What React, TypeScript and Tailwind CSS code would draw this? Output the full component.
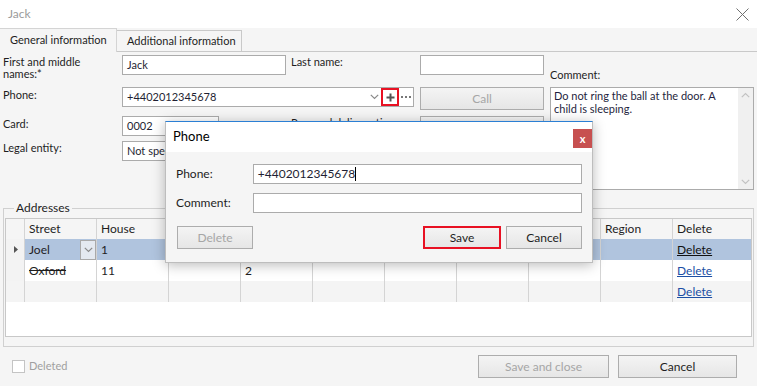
import React from "react";

const fieldCls = "h-[20px] border border-[#ababab] bg-white flex items-center pl-[4px] text-[#1f1f33]";

function Chevron({ up = false, className = "" }: { up?: boolean; className?: string }) {
  return (
    <svg width="9" height="6" viewBox="0 0 9 6" className={className}>
      <path
        d={up ? "M0.8 5.2L4.5 1.5L8.2 5.2" : "M0.8 0.8L4.5 4.5L8.2 0.8"}
        fill="none"
        stroke="currentColor"
        strokeWidth="1.2"
      />
    </svg>
  );
}

function Button({ label, disabled = false, className = "" }: { label: string; disabled?: boolean; className?: string }) {
  return (
    <div
      className={`flex items-center justify-center border border-[#adadad] bg-linear-to-b from-[#f4f4f4] to-[#e6e6e6] ${
        disabled ? "text-[#a6a6a6]" : "text-[#1e1e1e]"
      } ${className}`}
    >
      {label}
    </div>
  );
}

const headers = ["", "Street", "House", "", "", "", "", "", "", "Region", "Delete"];

interface GridRow {
  cells: string[];
  bg: string;
  selected?: boolean;
  struck?: boolean;
}

const rows: GridRow[] = [
  { cells: ["Joel", "1", "", "", "", "", "", "", ""], bg: "bg-[#b0c4de]", selected: true },
  { cells: ["Oxford", "11", "", "2", "", "", "", "", ""], bg: "bg-white", struck: true },
  { cells: ["", "", "", "", "", "", "", "", ""], bg: "bg-[#f4f4f4]" },
];

export default function App() {
  return (
    <div className="relative w-[757px] h-[386px] overflow-hidden bg-[#f5f5f5] text-[11px] text-[#1e1e1e] font-['Lato','Noto_Sans',sans-serif]">
      {/* window title */}
      <div className="h-[28px] bg-white flex items-center justify-between pl-[8px] pr-[8px]">
        <span className="text-[12px] text-[#9b9b9b]">Jack</span>
        <svg width="13" height="13" viewBox="0 0 13 13">
          <path d="M0.5 0.5L12.5 12.5M12.5 0.5L0.5 12.5" stroke="#707070" strokeWidth="1" />
        </svg>
      </div>

      {/* tabs */}
      <div className="flex h-[24px]">
        <div className="w-[117px] border-t border-r border-[#d4d4d4] flex items-center pl-[10px]">
          General information
        </div>
        <div className="mt-[2px] w-[125px] border-r border-t border-b border-[#c9c9c9] flex items-center pl-[10px]">
          Additional information
        </div>
        <div className="flex-1 border-b border-[#c9c9c9]" />
      </div>

      {/* form */}
      <div className="flex h-[149px]">
        <div className="w-[544px] pl-[3px] pt-[3px]">
          <div className="flex h-[20px] items-start">
            <div className="w-[119px] leading-[12px] pt-[1px]">
              First and middle
              <br />
              names:*
            </div>
            <div className={`${fieldCls} w-[164px]`}>Jack</div>
            <div className="ml-[5px] w-[129px] leading-[12px] pt-[1px]">Last name:</div>
            <div className={`${fieldCls} w-[124px]`} />
          </div>

          <div className="flex h-[23px] items-start mt-[12px]">
            <div className="w-[119px] leading-[12px] pt-[2px]">Phone:</div>
            <div className="h-[20px] w-[292px] border border-[#ababab] bg-white flex items-center">
              <div className="flex-1 pl-[4px] text-[#1f1f33]">+4402012345678</div>
              <div className="w-[14px] h-full flex items-center justify-center text-[#8a8a8a]">
                <Chevron />
              </div>
              <div className="w-[18px] h-[18px] border-2 border-[#e81123] flex items-center justify-center">
                <svg width="9" height="9" viewBox="0 0 9 9">
                  <path d="M4.5 0.5V8.5M0.5 4.5H8.5" stroke="#555" strokeWidth="2" />
                </svg>
              </div>
              <div className="w-[14px] h-full flex items-center justify-center">
                <svg width="10" height="2" viewBox="0 0 10 2">
                  <rect x="0" y="0" width="2" height="2" fill="#777" />
                  <rect x="4" y="0" width="2" height="2" fill="#777" />
                  <rect x="8" y="0" width="2" height="2" fill="#777" />
                </svg>
              </div>
            </div>
            <Button label="Call" disabled className="ml-[6px] w-[124px] h-[23px] text-[12px]" />
          </div>

          <div className="flex h-[20px] items-start mt-[6px]">
            <div className="w-[119px] leading-[12px] pt-[2px]">Card:</div>
            <div className={`${fieldCls} w-[97px]`}>0002</div>
            <div className="ml-[72px] w-[129px] leading-[12px] pt-[1px]">Personal delivery time:</div>
            <Button label="" className="w-[124px] h-[23px]" />
          </div>

          <div className="flex h-[20px] items-start mt-[5px]">
            <div className="w-[119px] leading-[12px] pt-[1px]">Legal entity:</div>
            <div className={`${fieldCls} w-[164px] justify-between`}>
              <span>Not specified</span>
              <span className="w-[14px] flex justify-center text-[#8a8a8a]">
                <Chevron />
              </span>
            </div>
          </div>
        </div>

        <div className="ml-[6px] w-[204px] pt-[17px]">
          <div className="leading-[12px]">Comment:</div>
          <div className="mt-[6px] h-[103px] border border-[#ababab] bg-white flex">
            <div className="flex-1 pl-[3px] pt-[1px] leading-[13px] text-[#1f1f40]">
              <div className="whitespace-nowrap">Do not ring the ball at the door. A</div>
              <div className="whitespace-nowrap">child is sleeping.</div>
            </div>
            <div className="w-[15px] bg-[#f0f0f0] flex flex-col justify-between items-center py-[4px] text-[#c2c2c2]">
              <Chevron up />
              <Chevron />
            </div>
          </div>
        </div>
      </div>

      {/* addresses */}
      <fieldset className="mx-[3px] border border-[#d0d0d0] px-[1px] pt-[3px] pb-[9px]">
        <legend className="ml-[9px] px-[2px] leading-[14px] text-[12px]">Addresses</legend>
        <div className="h-[119px] border border-[#c8c8c8] bg-white">
          <div className="grid grid-cols-[18px_repeat(9,72px)_1fr] h-[20px] bg-[#f5f5f5]">
            {headers.map((h, i) => (
              <div
                key={i}
                className={`flex items-center pl-[4px] text-[12px] ${i > 0 ? "border-l border-[#d4d4d4]" : ""}`}
              >
                {h}
              </div>
            ))}
          </div>
          {rows.map((r, ri) => (
            <div key={ri} className="grid grid-cols-[18px_repeat(9,72px)_1fr] h-[21px] text-[12px]">
              <div className={`flex items-center pl-[8px] ${r.bg === "bg-[#f4f4f4]" ? "bg-[#f4f4f4]" : "bg-[#f3f3f3]"}`}>
                {r.selected && (
                  <svg width="4" height="7" viewBox="0 0 4 7">
                    <path d="M0 0L4 3.5L0 7Z" fill="#555" />
                  </svg>
                )}
              </div>
              {r.cells.map((c, ci) => (
                <div
                  key={ci}
                  className={`${r.bg} border-l border-[#d4d4d4] flex items-center pl-[4px] ${
                    r.struck && ci === 0 ? "line-through" : ""
                  } ${r.selected && ci === 0 ? "justify-between pr-[0px]" : ""}`}
                >
                  <span>{c}</span>
                  {r.selected && ci === 0 && (
                    <span className="w-[16px] h-[20px] border border-[#a9a9a9] bg-[#e4e9f0] flex items-center justify-center text-[#8a8a8a]">
                      <Chevron />
                    </span>
                  )}
                </div>
              ))}
              <div className={`${r.bg} border-l border-[#d4d4d4] flex items-center pl-[4px]`}>
                <span className={`underline ${r.selected ? "text-[#111]" : "text-[#1d4fa5]"}`}>Delete</span>
              </div>
            </div>
          ))}
        </div>
      </fieldset>

      {/* footer */}
      <div className="h-[39px] flex items-center pl-[12px] pr-[20px]">
        <div className="w-[13px] h-[13px] border border-[#c4c4c4] bg-white" />
        <span className="ml-[4px] text-[#a0a0a0]">Deleted</span>
        <div className="flex-1" />
        <Button label="Save and close" disabled className="w-[131px] h-[23px] text-[12px]" />
        <Button label="Cancel" className="ml-[9px] w-[119px] h-[23px] text-[12px]" />
      </div>

      {/* phone dialog */}
      <div className="absolute left-[165px] top-[121px] w-[428px] h-[142px] border border-[#bdbdbd] border-t-[#2b7fd4] bg-[#f5f5f5] shadow-[0_2px_12px_rgba(0,0,0,0.28)]">
        <div className="h-[30px] bg-white flex items-center justify-between pl-[7px]">
          <span className="text-[13px] text-black">Phone</span>
          <div className="mt-[2px] w-[19px] h-[19px] bg-[#c75050] text-white font-bold text-[11px] flex items-center justify-center leading-none">
            x
          </div>
        </div>
        <div className="px-[10px] pt-[12px]">
          <div className="flex items-center">
            <div className="w-[77px] text-[12px]">Phone:</div>
            <div className={`${fieldCls} w-[330px] text-[12px]`}>
              +4402012345678
              <span className="inline-block w-[1px] h-[14px] bg-black" />
            </div>
          </div>
          <div className="flex items-center mt-[9px]">
            <div className="w-[77px] text-[12px]">Comment:</div>
            <div className={`${fieldCls} w-[330px]`} />
          </div>
          <div className="flex items-center mt-[13px]">
            <Button label="Delete" disabled className="ml-[1px] w-[76px] h-[23px] text-[12px]" />
            <div className="flex-1" />
            <div className="border-2 border-[#e81123]">
              <Button label="Save" className="w-[74px] h-[19px] border-0 text-[12px]" />
            </div>
            <Button label="Cancel" className="ml-[5px] w-[76px] h-[23px] text-[12px]" />
          </div>
        </div>
      </div>
    </div>
  );
}
